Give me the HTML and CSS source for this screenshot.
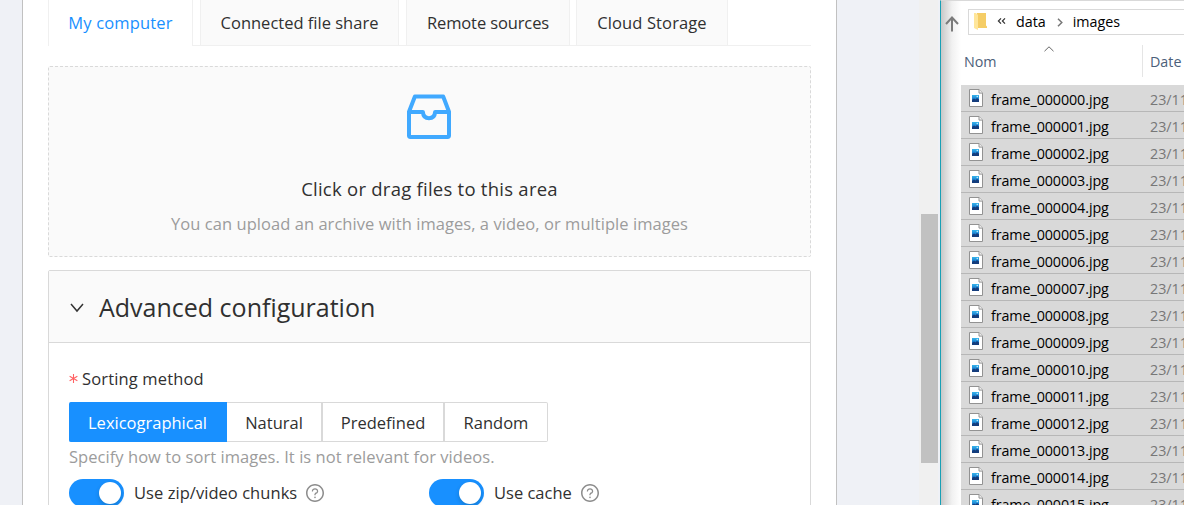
FILE: index.html
```html
<!DOCTYPE html>
<html lang="en"><head><meta charset="utf-8"><title>Create task</title><link rel="stylesheet" href="styles.css"></head>
<body>
<svg class="defs" width="0" height="0"><defs>
<linearGradient id="sky" x1="0" y1="0" x2="0" y2="1"><stop offset="0" stop-color="#36b5ec"/><stop offset=".5" stop-color="#1e86d4"/><stop offset="1" stop-color="#164f96"/></linearGradient>
<symbol id="jpg" viewBox="0 0 14 18"><path d="M.5.5h9.600l3.400 3.600v13.400H.5z" fill="#fff" stroke="#929292"/><path d="M10 .5v3.600h3.500" fill="#f0f0f0" stroke="#929292"/><path d="M3 6h7v7H3z" fill="url(#sky)"/><path d="M3 11l2-1.500 1.500 1L8 9l2 1.500V13H3z" fill="#143d7d"/><circle cx="8.300" cy="7.500" r=".8" fill="#c5effc"/></symbol>
<symbol id="help" viewBox="64 64 896 896"><path d="M512 64C264.600 64 64 264.600 64 512s200.600 448 448 448 448-200.600 448-448S759.400 64 512 64zm0 820c-205.400 0-372-166.600-372-372s166.600-372 372-372 372 166.600 372 372-166.600 372-372 372z"/><path d="M623.600 316.700C593.600 290.400 554 276 512 276s-81.600 14.500-111.600 40.700C369.200 344 352 380.700 352 420v7.600c0 4.400 3.600 8 8 8h48c4.400 0 8-3.600 8-8V420c0-44.100 43.100-80 96-80s96 35.900 96 80c0 31.100-22 59.600-56.100 72.700-21.200 8.100-39.200 22.300-52.100 40.900-13.100 19-19.900 41.800-19.900 64.900V620c0 4.400 3.600 8 8 8h48c4.400 0 8-3.600 8-8v-22.700a48.300 48.300 0 0130.900-44.800c59-22.700 97.100-74.700 97.100-132.500.1-39.300-17.100-76-48.300-103.300zM472 732a40 40 0 1080 0 40 40 0 10-80 0z"/></symbol>
</defs></svg>
<div class="screen">
<main class="browser">
<div class="panel">
<nav class="tabs"><div class="tab t1 active"><span>My computer</span></div><div class="tab t2"><span>Connected file share</span></div><div class="tab t3"><span>Remote sources</span></div><div class="tab t4"><span>Cloud Storage</span></div></nav>
<section class="dragger">
<svg class="inbox" viewBox="0 0 44 45"><path d="M7.900 2.500H36.200L42 17.800V41.500Q42 42.900 40.600 42.900H3.400Q2 42.900 2 41.500V17.800zM2 18H15.900C16.200 22.500 18.500 24.200 22 24.200S27.800 22.500 28.100 18H42" fill="none" stroke="#40a9ff" stroke-width="4" stroke-linejoin="round"/></svg>
<p class="drag-title">Click or drag files to this area</p>
<p class="drag-hint">You can upload an archive with images, a video, or multiple images</p>
</section>
<section class="collapse">
<header><svg class="chev" viewBox="0 0 14 10"><path d="M1 1l6 7 6-7" fill="none" stroke="#333" stroke-width="1.500"/></svg><h2>Advanced configuration</h2></header>
<div class="content">
<div class="label"><svg class="star" viewBox="0 0 10 10"><path d="M5 0v10M.7 2.500l8.600 5M9.300 2.500l-8.600 5" stroke="#ff6264" stroke-width="1.200"/></svg><span>Sorting method</span></div>
<div class="radios"><div class="radio r1 on"><span>Lexicographical</span></div><div class="radio r2"><span>Natural</span></div><div class="radio r3"><span>Predefined</span></div><div class="radio r4"><span>Random</span></div></div>
<p class="hint">Specify how to sort images. It is not relevant for videos.</p>
<div class="switches"><div class="sw"><i class="toggle"></i><span class="zip">Use zip/video chunks</span><svg class="help"><use href="#help"/></svg></div><div class="sw"><i class="toggle"></i><span class="cache">Use cache</span><svg class="help"><use href="#help"/></svg></div></div>
</div></section>
</div>
<div class="scroll"><div class="thumb"></div></div>
</main>
<aside class="explorer">
<div class="path"><svg class="up" viewBox="0 0 14 16"><path d="M7 15.500V2M1 8l6-6.500L13 8" fill="none" stroke="#7b7b7b" stroke-width="2"/></svg>
<div class="address"><svg class="folder" viewBox="0 0 13 17"><path d="M3 0h9v12.500l1 1V15H3z" fill="#f5cd66"/><path d="M0 0h2l2 2v15L0 15z" fill="#ffe69a"/></svg><svg class="dbl" viewBox="0 0 9 6"><path d="M4 .4L1.400 3 4 5.600M8 .4L5.400 3 8 5.600" fill="none" stroke="#333" stroke-width="1.200"/></svg><span class="data">data</span><svg class="next" viewBox="0 0 6 9"><path d="M1 .7l3.800 3.800L1 8.300" fill="none" stroke="#777" stroke-width="1.500"/></svg><span class="images">images</span></div></div>
<div class="cols"><span class="nom">Nom</span><svg class="sort" viewBox="0 0 10 6"><path d="M.5 5.200L5 .8l4.500 4.400" fill="none" stroke="#666"/></svg><span class="date">Date</span></div>
<div class="files">
<div class="file"><svg><use href="#jpg"/></svg><span>frame_000000.jpg</span><time>23/11</time></div>
<div class="file"><svg><use href="#jpg"/></svg><span>frame_000001.jpg</span><time>23/11</time></div>
<div class="file"><svg><use href="#jpg"/></svg><span>frame_000002.jpg</span><time>23/11</time></div>
<div class="file"><svg><use href="#jpg"/></svg><span>frame_000003.jpg</span><time>23/11</time></div>
<div class="file"><svg><use href="#jpg"/></svg><span>frame_000004.jpg</span><time>23/11</time></div>
<div class="file"><svg><use href="#jpg"/></svg><span>frame_000005.jpg</span><time>23/11</time></div>
<div class="file"><svg><use href="#jpg"/></svg><span>frame_000006.jpg</span><time>23/11</time></div>
<div class="file"><svg><use href="#jpg"/></svg><span>frame_000007.jpg</span><time>23/11</time></div>
<div class="file"><svg><use href="#jpg"/></svg><span>frame_000008.jpg</span><time>23/11</time></div>
<div class="file"><svg><use href="#jpg"/></svg><span>frame_000009.jpg</span><time>23/11</time></div>
<div class="file"><svg><use href="#jpg"/></svg><span>frame_000010.jpg</span><time>23/11</time></div>
<div class="file"><svg><use href="#jpg"/></svg><span>frame_000011.jpg</span><time>23/11</time></div>
<div class="file"><svg><use href="#jpg"/></svg><span>frame_000012.jpg</span><time>23/11</time></div>
<div class="file"><svg><use href="#jpg"/></svg><span>frame_000013.jpg</span><time>23/11</time></div>
<div class="file"><svg><use href="#jpg"/></svg><span>frame_000014.jpg</span><time>23/11</time></div>
<div class="file"><svg><use href="#jpg"/></svg><span>frame_000015.jpg</span><time>23/11</time></div>
</div></aside>
</div></body></html>
```
FILE: styles.css
```css
*{box-sizing:border-box}
body{margin:0;overflow:hidden;font-family:"Open Sans","Noto Sans",sans-serif;font-size:16.5px;color:#303030}
svg{display:block;flex:none}
.defs{position:absolute}
p,h2{margin:0;font-weight:400}
span,p,h2,time{white-space:nowrap}
.screen{display:flex;width:1184px;height:505px;overflow:hidden;background:#fff}
.browser{display:flex;width:940px;flex:none;background:#eff1f6;padding-left:22px}
.panel{width:815px;height:505px;background:#fff;border:solid #c1c1c1;border-width:0 1px;padding:0 25px;overflow:hidden}
.tabs{display:flex;height:46px;gap:7px;border-bottom:1px solid #f0f0f0}
.tab{height:45px;background:#fafafa;border:solid #f0f0f0;border-width:0 1px;display:flex;justify-content:center;line-height:45px}
.tab.active{height:46px;background:#fff;color:#1890ff}
.t1{width:145px;letter-spacing:.15px}.t2{width:199px}.t3{width:164px;letter-spacing:-.12px}.t4{width:152px;margin-left:-1px;letter-spacing:.12px}
.dragger{margin-top:20px;height:191px;background:#fafafa;border:1px dashed #d9d9d9;border-radius:2px;padding-top:27px;display:flex;flex-direction:column;align-items:center}
.inbox{width:44px;height:45px;margin-right:1px}
.drag-title{font-size:18.5px;line-height:28px;margin-top:36px;letter-spacing:.25px}
.drag-hint{line-height:26px;margin-top:8px;color:#9c9c9c;letter-spacing:.05px}
.collapse{margin-top:13px;height:300px;border:1px solid #d9d9d9;border-radius:2px}
.collapse header{height:72px;background:#fafafa;border-bottom:1px solid #d9d9d9;display:flex;align-items:center;padding-left:21px}
.chev{width:14px;height:10px;margin-top:2px}
h2{font-size:25px;line-height:40px;margin-left:15px}
.content{padding:21px 20px 0}
.label{display:flex;align-items:center;height:28px;letter-spacing:.15px}
.star{width:9px;height:9px;margin-right:4px}
.radios{display:flex;margin-top:10px;height:40px}
.radio{height:40px;display:flex;justify-content:center;line-height:39px;border:1px solid #d9d9d9;border-left:0}
.radio.on{background:#1890ff;color:#fff;border-color:#1890ff;border-radius:2px 0 0 2px}
.r1{width:158px}.r2{width:96px}.r3{width:122px}.r4{width:103px;border-radius:0 2px 2px 0}
.r2,.r3{border-right-width:2px}
.hint{line-height:28px;margin-top:1px;color:#9c9c9c;letter-spacing:.05px}
.switches{display:flex;margin-top:8px}
.sw{width:360px;height:28px;display:flex;align-items:center}
.toggle{width:55px;height:28px;border-radius:14px;background:#1890ff;flex:none;padding:3px;display:flex;justify-content:flex-end}
.toggle::after{content:"";width:22px;height:22px;border-radius:50%;background:#fff;box-shadow:0 2px 4px #00230b33}
.sw span{margin-left:10px;padding-bottom:2px}
.zip{letter-spacing:.05px}
.help{width:18px;height:18px;margin-left:9px;fill:#8c8c8c}
.scroll{margin-left:82px;width:19px;background:#f0f0f0;padding:214px 0 0 2px}
.thumb{width:17px;height:249px;background:#c1c1c1}
.explorer{width:244px;flex:none;overflow:hidden;border-left:1px solid #18a0b5;border-top:1px solid #d9d9d9;background:linear-gradient(90deg,#c8c8c8,#f1f1f1 11px,#fff 20px);color:#000}
.path{display:flex;padding:8px 0 0 4px;height:34px}
.up{width:14px;height:16px;margin-top:7px}
.address{display:flex;align-items:center;width:230px;flex:none;margin-left:9px;height:26px;border:1px solid #d9d9d9;background:#fff;font-size:14.3px}
.address span{padding-bottom:2px}
.folder{width:13px;height:17px;margin:0 0 1px 5px}
.dbl{width:9px;height:6px;margin:0 0 2px 10px}
.data{margin-left:10px}.next{width:6px;height:9px;margin-left:11px}.images{margin-left:10px}
.cols{display:flex;height:50px;color:#4c607a;font-size:14.3px;padding-left:23px}
.nom{width:34px;padding-top:17px}
.sort{width:10px;height:6px;margin:11px 0 0 46px}
.date{margin:10px 0 8px 88px;border-left:1px solid #e5e5e5;padding:7px 0 0 7px}
.files{margin-left:20px}
.file{height:27px;background:#d9d9d9;border-bottom:1px solid #b7b7b7;display:flex;align-items:center;padding-left:8px;font-size:14.3px}
.file svg{width:14px;height:18px}
.file span{margin-left:8px;width:159px;flex:none;padding-top:2px;letter-spacing:-.08px}
.file time{color:#777;padding-top:2px}
```
